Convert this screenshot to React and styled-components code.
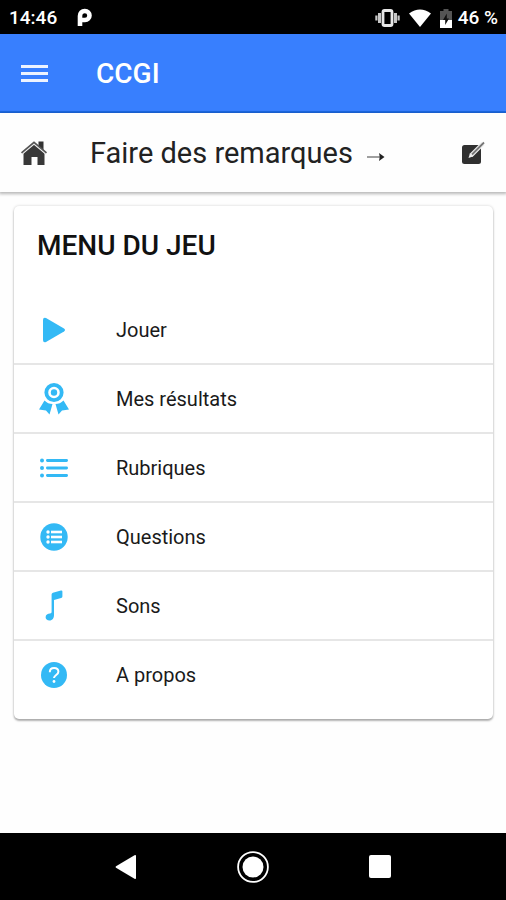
import React from "react";
import styled, { createGlobalStyle } from "styled-components";

const GlobalStyle = createGlobalStyle`
  *, *::before, *::after { box-sizing: border-box; }
  body {
    margin: 0;
    background: #fff;
    font-family: Roboto, "Liberation Sans", sans-serif;
  }
`;

const Screen = styled.div`
  display: flex;
  flex-direction: column;
  min-height: 100vh;
  background: #fefefe;
`;

const StatusBar = styled.div`
  display: flex;
  align-items: center;
  height: 34px;
  padding: 2px 8px 0 9px;
  background: #000;
  color: #fff;
  font-size: 19px;
  font-weight: 500;
  line-height: 24px;
`;

const StatusGroup = styled.div`
  display: flex;
  align-items: center;
  gap: ${(p) => p.$gap}px;
  margin-left: ${(p) => (p.$end ? "auto" : "0")};
`;

const Icon = styled.svg`
  display: block;
  flex: none;
`;

const Bar = styled.header`
  display: flex;
  align-items: center;
  height: 79px;
  padding: 2px 20px 0;
  background: #387ffe;
  border-bottom: 2px solid #1c6ae6;
  color: #fff;
`;

const SubBar = styled.div`
  display: flex;
  align-items: center;
  height: 79px;
  padding: 0 20px;
  background: #fefefe;
  box-shadow: 0 1px 3px 1px rgba(0, 0, 0, 0.28);
  color: #222;
`;

const IconButton = styled.button`
  display: flex;
  align-items: center;
  justify-content: center;
  flex: none;
  padding: 0;
  border: 0;
  background: none;
  color: inherit;
  cursor: pointer;
`;

const AppTitle = styled.h1`
  margin: 0 0 0 48px;
  font-size: 28px;
  font-weight: 500;
  line-height: 36px;
`;

const RemarkLink = styled.a`
  display: flex;
  align-items: center;
  gap: 14px;
  flex: 1;
  margin-left: 42px;
  color: inherit;
  font-size: 29px;
  line-height: 36px;
  text-decoration: none;
  white-space: nowrap;
`;

const Content = styled.main`
  flex: 1;
  padding: 14px 13px 24px 14px;
`;

const Card = styled.section`
  padding-bottom: 11px;
  border-radius: 5px;
  background: #fff;
  box-shadow: 0 2px 2px rgba(0, 0, 0, 0.28), 0 0 3px rgba(0, 0, 0, 0.18);
`;

const CardTitle = styled.h2`
  margin: 0;
  padding: 22px 23px 32px;
  color: #111;
  font-size: 28px;
  font-weight: 500;
  line-height: 36px;
`;

const MenuList = styled.ul`
  margin: 0;
  padding: 0;
  list-style: none;
`;

const MenuItem = styled.li`
  & + & { border-top: 2px solid #e6e6e6; }
`;

const MenuButton = styled.button`
  display: grid;
  grid-template-columns: 32px 1fr;
  column-gap: 46px;
  align-items: center;
  width: 100%;
  height: 67px;
  padding: 0 24px;
  border: 0;
  background: none;
  color: #1a1a1a;
  font: 400 20px/28px Roboto, "Liberation Sans", sans-serif;
  text-align: left;
  cursor: pointer;
`;

const NavBar = styled.nav`
  display: grid;
  grid-template-columns: repeat(3, 1fr);
  align-items: center;
  height: 67px;
  padding: 0 62px;
  background: #000;
  color: #fff;
`;

const BLUE = "#33b9f5";

const PlayIcon = () => (
  <Icon width="32" height="34" viewBox="0 0 32 34" fill={BLUE} aria-hidden="true">
    <path d="M5 7q0-3 3-2l18 10.500q2 1.500 0 3L8 29q-3 1-3-2z" />
  </Icon>
);

const RibbonIcon = () => (
  <Icon width="32" height="34" viewBox="0 0 32 34" fill={BLUE} aria-hidden="true">
    <circle cx="16" cy="10.500" r="7.700" fill="none" stroke={BLUE} strokeWidth="3.800" />
    <circle cx="16" cy="10.500" r="3.200" />
    <path d="M6.500 18.500q3.500 3.500 8 3.500L11.500 32.500l-3.500-4-7-1z" />
    <path d="M25.500 18.500q-3.500 3.500-8 3.500L20.500 32.500l3.500-4 7-1z" />
  </Icon>
);

const ListIcon = () => (
  <Icon width="32" height="34" viewBox="0 0 32 34" fill={BLUE} aria-hidden="true">
    {[9.5, 17, 24.5].map((y) => (
      <g key={y}>
        <circle cx="4" cy={y} r="2" />
        <rect x="8" y={y - 1.4} width="22" height="2.800" rx="1.400" />
      </g>
    ))}
  </Icon>
);

const ListCircleIcon = () => (
  <Icon width="32" height="34" viewBox="0 0 32 34" aria-hidden="true">
    <circle cx="16" cy="17" r="13.700" fill={BLUE} />
    <g fill="#fff">
      {[12, 17, 22].map((y) => (
        <g key={y}>
          <circle cx="10" cy={y} r="1.700" />
          <rect x="13" y={y - 1.3} width="11" height="2.600" />
        </g>
      ))}
    </g>
  </Icon>
);

const NoteIcon = () => (
  <Icon width="32" height="34" viewBox="0 0 32 34" fill={BLUE} aria-hidden="true">
    <path d="M13.600 5.500q0-1.300 1.300-1.700l8-2.300q1.500-.3 1.500 1v5q0 1.300-1.300 1.600L16 10.900V26c0 3-1.500 5.500-4.500 5.500-2.400 0-3.900-1.300-3.900-3.200 0-2.600 2.200-3.400 4.400-3.700 1.300-.2 1.600-.7 1.600-2z" />
  </Icon>
);

const HelpIcon = () => (
  <Icon width="32" height="34" viewBox="0 0 32 34" aria-hidden="true">
    <circle cx="16" cy="17" r="13" fill={BLUE} />
    <path d="M11.800 14.200c0-2.700 1.800-4.200 4.300-4.200s4.300 1.500 4.300 3.700c0 3.200-4.400 3.300-4.400 6.300" fill="none" stroke="#fff" strokeWidth="2" />
    <circle cx="16" cy="23.500" r="1.400" fill="#fff" />
  </Icon>
);

const ITEMS = [
  { label: "Jouer", Glyph: PlayIcon },
  { label: "Mes résultats", Glyph: RibbonIcon },
  { label: "Rubriques", Glyph: ListIcon },
  { label: "Questions", Glyph: ListCircleIcon },
  { label: "Sons", Glyph: NoteIcon },
  { label: "A propos", Glyph: HelpIcon },
];

export default function App() {
  return (
    <>
      <GlobalStyle />
      <Screen>
        <StatusBar>
          <StatusGroup $gap={20}>
            <span>14:46</span>
            <Icon width="16" height="20" viewBox="0 0 16 20" aria-hidden="true">
              <path d="M3 18V8c0-3 2-5 4.800-5s4.700 2 4.700 4.500S10.500 12 8 12H5" fill="none" stroke="#fff" strokeWidth="4.600" />
            </Icon>
          </StatusGroup>
          <StatusGroup $gap={6} $end>
            <StatusGroup $gap={9}>
              <Icon width="25" height="18" viewBox="0 0 25 18" fill="#c8c8c8" aria-hidden="true">
                <rect x="8" y="1.500" width="9" height="15" rx="1.500" fill="none" stroke="#e8e8e8" strokeWidth="2.800" />
                <rect x="3" y="4" width="3" height="10" />
                <rect x="0.300" y="6.500" width="2.200" height="5" />
                <rect x="19" y="4" width="3" height="10" />
                <rect x="22.500" y="6.500" width="2.200" height="5" />
              </Icon>
              <Icon width="22" height="18" viewBox="0 0 22 18" fill="#fff" aria-hidden="true">
                <path d="M0 4.500Q11-3.500 22 4.500L11 18z" />
              </Icon>
              <Icon width="12" height="19" viewBox="0 0 12 19" aria-hidden="true">
                <path d="M3.500 0h5v2H12v17H0V2h3.500z" fill="#555" />
                <path d="M0 11h12v8H0z" fill="#fff" />
                <path d="M6.800 4.500v5H9l-3.800 6.500v-5H3z" fill="#111" />
              </Icon>
            </StatusGroup>
            <span>46 %</span>
          </StatusGroup>
        </StatusBar>

        <Bar>
          <IconButton type="button" aria-label="Menu">
            <Icon width="28" height="20" viewBox="0 0 28 20" fill="#edf3ff" aria-hidden="true">
              <rect x="1" y="1" width="27" height="3" />
              <rect x="1" y="8" width="27" height="3" />
              <rect x="1" y="15" width="27" height="3" />
            </Icon>
          </IconButton>
          <AppTitle>CCGI</AppTitle>
        </Bar>

        <SubBar>
          <IconButton type="button" aria-label="Accueil">
            <Icon width="28" height="26" viewBox="0 0 28 26" aria-hidden="true">
              <path d="M18.500 1.500h5v9l-5-4z" fill="#333" />
              <path d="M3.500 13L14 4l10.500 9v12h-7v-8h-6v8h-8z" fill="#383838" />
              <path d="M2 14L14 4l12 10" fill="none" stroke="#eee" strokeWidth="1.600" />
              <path d="M1.500 12.800L14 2.300l12.500 10.500" fill="none" stroke="#555" strokeWidth="1.700" />
            </Icon>
          </IconButton>
          <RemarkLink href="#remarques">
            Faire des remarques
            <Icon width="18" height="18" viewBox="0 0 18 18" aria-hidden="true">
              <path d="M0 13h14" stroke="#888" strokeWidth="1.600" />
              <path d="M12 9l5.500 4-5.500 4q1.500-4 0-8z" fill="#222" />
            </Icon>
          </RemarkLink>
          <IconButton type="button" aria-label="Modifier">
            <Icon width="24" height="24" viewBox="0 0 24 24" aria-hidden="true">
              <rect x="0" y="4" width="19" height="19" rx="2.500" fill="#303030" />
              <path d="M9 14.500L21 2.500" fill="none" stroke="#eee" strokeWidth="4.200" />
              <path d="M10 13.500L22 1.500" stroke="#777" strokeWidth="1.800" />
              <path d="M6.500 17l1.400-4.400 3 3z" fill="#eee" />
            </Icon>
          </IconButton>
        </SubBar>

        <Content>
          <Card>
            <CardTitle>MENU DU JEU</CardTitle>
            <MenuList>
              {ITEMS.map(({ label, Glyph }) => (
                <MenuItem key={label}>
                  <MenuButton type="button">
                    <Glyph />
                    {label}
                  </MenuButton>
                </MenuItem>
              ))}
            </MenuList>
          </Card>
        </Content>

        <NavBar>
          <IconButton type="button" aria-label="Retour">
            <Icon width="24" height="26" viewBox="0 0 24 26" fill="#fff" aria-hidden="true">
              <path d="M2 12.300L20.500 1.300q1.500-.7 1.500.8v21.800q0 1.500-1.500.8L2 13.700q-1-.7 0-1.400z" />
            </Icon>
          </IconButton>
          <IconButton type="button" aria-label="Écran d'accueil">
            <Icon width="34" height="34" viewBox="0 0 34 34" fill="#fff" aria-hidden="true">
              <circle cx="17" cy="17" r="14.900" fill="none" stroke="#fff" strokeWidth="1.800" />
              <circle cx="17" cy="17" r="10.500" />
            </Icon>
          </IconButton>
          <IconButton type="button" aria-label="Applications récentes">
            <Icon width="22" height="23" viewBox="0 0 22 23" fill="#fff" aria-hidden="true">
              <rect width="22" height="23" rx="2" />
            </Icon>
          </IconButton>
        </NavBar>
      </Screen>
    </>
  );
}
